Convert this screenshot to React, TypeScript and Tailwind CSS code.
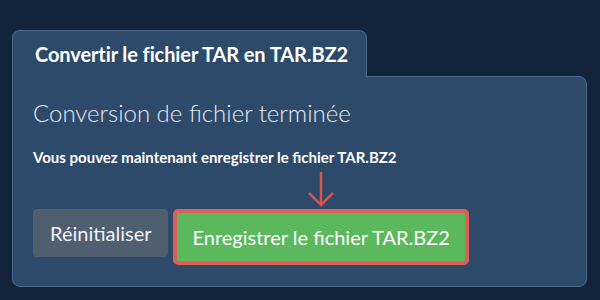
import React from "react";

const ArrowDown = () => (
  <svg
    width="30"
    height="36"
    viewBox="0 0 30 36"
    fill="none"
    stroke="#d9534f"
    strokeWidth="2.5"
    className="absolute left-1/2 -translate-x-1/2 top-[-37px]"
  >
    <path d="M15 0 V33" />
    <path d="M3 21 L15 33 L27 21" />
  </svg>
);

const App = () => {
  return (
    <div
      className="w-[600px] h-[300px] bg-[#12233a] pt-[30px] px-[12px] text-white"
      style={{ fontFamily: "Lato, 'Open Sans', sans-serif" }}
    >
      <div className="w-[575px]">
        <div className="relative z-10 -mb-px inline-flex h-[47px] items-center pl-[22px] pr-[18px] bg-[#2d4a6b] border border-b-0 border-[#4b6a8c] rounded-t-[8px]">
          <h1 className="text-[20px] font-bold tracking-[-0.1px]">Convertir le fichier TAR en TAR.BZ2</h1>
        </div>
        <div className="h-[211px] bg-[#2d4a6b] border border-[#4b6a8c] rounded-[8px] rounded-tl-none px-[20px] pt-[21px]">
          <h2 className="text-[24px] font-light leading-[30px] text-[#e6ebf1]">Conversion de fichier terminée</h2>
          <p className="mt-[19px] text-[15px] font-bold leading-[20px]">
            Vous pouvez maintenant enregistrer le fichier TAR.BZ2
          </p>
          <div className="mt-[42px] flex items-start gap-[5px]">
            <button className="h-[48px] px-[17px] rounded-[4px] bg-[#4f5f70] text-[20px] text-[#f0f2f4]">
              Réinitialiser
            </button>
            <div className="relative">
              <ArrowDown />
              <button className="h-[56px] px-[15px] rounded-[5px] bg-[#5cb85c] border-[4px] border-[#dc5f58] text-[20px] text-white">
                Enregistrer le fichier TAR.BZ2
              </button>
            </div>
          </div>
        </div>
      </div>
    </div>
  );
};

export default App;
